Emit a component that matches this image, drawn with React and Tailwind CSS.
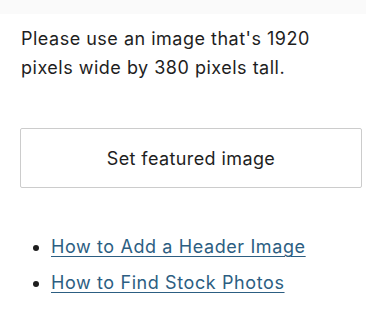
import React from 'react';

const links = ['How to Add a Header Image', 'How to Find Stock Photos'];

const App = () => {
  return (
    <div className="w-[366px] h-[313px] bg-white overflow-hidden font-['Inter','Liberation_Sans',sans-serif] text-[#1e1e1e]">
      {/* faint strip from the panel above */}
      <div className="h-[14px] bg-[#fafafa]" />

      <div className="px-5 pt-[10px]">
        <p className="text-[18px] leading-[29px] tracking-[0.5px] pl-px">
          Please use an image that's 1920 pixels wide by 380 pixels tall.
        </p>

        <button className="mt-[46px] w-[342px] h-[60px] border border-[#cccccc] rounded-[2px] bg-white text-[18px] tracking-[0.4px] text-[#1e1e1e]">
          Set featured image
        </button>

        <ul className="mt-[41px] list-disc pl-[31px] text-[18px] leading-[36px] tracking-[0.6px] marker:text-[#1e1e1e]">
          {links.map((link) => (
            <li key={link}>
              <a href="#" className="text-[#2c5e82] underline underline-offset-[3px] decoration-1">
                {link}
              </a>
            </li>
          ))}
        </ul>
      </div>
    </div>
  );
};

export default App;
